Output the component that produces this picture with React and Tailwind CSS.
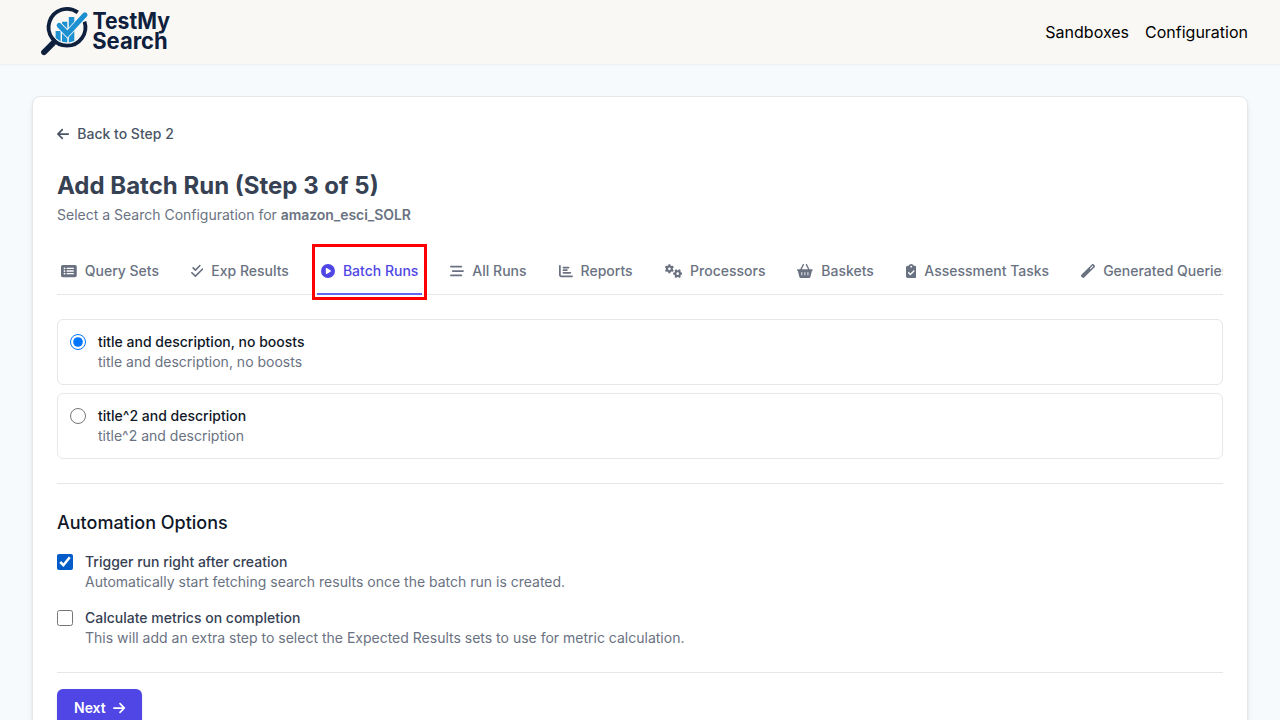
import React from "react";
import {
  FaArrowLeft,
  FaArrowRight,
  FaBarsStaggered,
  FaBasketShopping,
  FaChartBar,
  FaCheckDouble,
  FaCirclePlay,
  FaClipboardCheck,
  FaGears,
  FaRectangleList,
  FaWandMagic,
} from "react-icons/fa6";

const tabs = [
  { label: "Query Sets", Icon: FaRectangleList, size: "w-[15.75px]" },
  { label: "Exp Results", Icon: FaCheckDouble, size: "w-[12.25px]" },
  { label: "Batch Runs", Icon: FaCirclePlay, size: "w-[14px]", active: true },
  { label: "All Runs", Icon: FaBarsStaggered, size: "w-[14px]" },
  { label: "Reports", Icon: FaChartBar, size: "w-[14px]" },
  { label: "Processors", Icon: FaGears, size: "w-[17.5px]" },
  { label: "Baskets", Icon: FaBasketShopping, size: "w-[15.75px]" },
  { label: "Assessment Tasks", Icon: FaClipboardCheck, size: "w-[10.5px]" },
  { label: "Generated Queries", Icon: FaWandMagic, size: "w-[14px]" },
];

const configurations = [
  { title: "title and description, no boosts", text: "title and description, no boosts", checked: true },
  { title: "title^2 and description", text: "title^2 and description", checked: false },
];

const options = [
  {
    title: "Trigger run right after creation",
    text: "Automatically start fetching search results once the batch run is created.",
    checked: true,
  },
  {
    title: "Calculate metrics on completion",
    text: "This will add an extra step to select the Expected Results sets to use for metric calculation.",
    checked: false,
  },
];

function Logo() {
  return (
    <svg width="140" height="64" viewBox="0 0 140 64" role="img" aria-label="TestMy Search">
      <path d="M21 43.2 12 52.2" stroke="#0e203d" strokeWidth="5.8" strokeLinecap="round" fill="none" />
      <path d="M23.5 39.5 19 44" stroke="#0e203d" strokeWidth="3.4" fill="none" />
      <path d="M45.8 12.4A18.4 18.4 0 1 0 52.5 21.6" stroke="#0e203d" strokeWidth="3.8" fill="none" />
      <g fill="#1c90d0">
        <path d="M23.6 31h5v10.4L23.6 38z" />
        <path d="M30 21.8h5.3v20.8l-5.3-.8z" />
        <path d="M36.8 17h5.5v24l-5.5 1.6z" />
      </g>
      <path d="M27.2 25.4 35.4 33.9 53 14.8" stroke="#f9f8f4" strokeWidth="6.6" fill="none" />
      <path d="M27.2 25.4 35.4 33.9 53 14.8" stroke="#1c90d0" strokeWidth="5" strokeLinecap="round" fill="none" />
      <g fill="#0e203d" fontFamily="Inter, sans-serif" fontWeight="700" fontSize="22.5">
        <text x="60.5" y="29.3" textLength="77.5" lengthAdjust="spacingAndGlyphs">TestMy</text>
        <text x="60.2" y="49.4" textLength="75.5" lengthAdjust="spacingAndGlyphs">Search</text>
      </g>
    </svg>
  );
}

export default function App() {
  return (
    <div className="h-screen overflow-hidden bg-[#f6fafd] font-['Inter',sans-serif] text-gray-900">
      <header className="flex h-16 items-center justify-between bg-[#f9f8f4] px-8 shadow-[0_1px_2px_0_rgb(0_0_0/0.05)]">
        <Logo />
        <nav className="flex gap-4 text-base text-black">
          <a href="#sandboxes">Sandboxes</a>
          <a href="#configuration">Configuration</a>
        </nav>
      </header>

      <main className="p-8">
        <section className="rounded-lg border border-gray-200 bg-white p-6 shadow-md">
          <a href="#step-2" className="flex h-6 items-center gap-2 pt-0.5 text-sm font-medium text-gray-600">
            <FaArrowLeft className="h-3.5 w-[12.25px]" />
            Back to Step 2
          </a>
          <h1 className="mt-[25px] text-2xl font-bold text-gray-700">Add Batch Run (Step 3 of 5)</h1>
          <p className="mt-[3px] text-sm text-gray-500">
            Select a Search Configuration for <span className="font-semibold tracking-[-0.08px]">amazon_esci_SOLR</span>
          </p>

          <div className="relative mt-6">
            <div className="overflow-hidden">
              <nav className="flex gap-6 shadow-[inset_0_-1px_0_#e5e7eb]">
                {tabs.map(({ label, Icon, size, active }) => (
                  <a
                    key={label}
                    href="#tab"
                    className={
                      active
                        ? "flex shrink-0 items-center gap-2 border-b-2 border-[#6366f1] px-1 py-3 text-sm font-medium whitespace-nowrap text-[#4f46e5]"
                        : "flex shrink-0 items-center gap-2 border-b-2 border-transparent px-1 py-3 text-sm font-medium whitespace-nowrap text-gray-500"
                    }
                  >
                    <Icon className={`h-3.5 shrink-0 ${size}`} />
                    {label}
                  </a>
                ))}
              </nav>
            </div>
            <div className="pointer-events-none absolute -top-[5px] left-[255px] h-14 w-[115px] border-3 border-[#ff0000]" />
          </div>

          <div className="mt-6 flex flex-col gap-2">
            {configurations.map((item) => (
              <label key={item.title} className="flex items-start gap-3 rounded-md border border-gray-200 p-3 text-sm">
                <input type="radio" name="configuration" defaultChecked={item.checked} className="mt-0.5 size-4" />
                <span className="flex flex-col">
                  <span className="font-medium text-gray-900">{item.title}</span>
                  <span className="text-gray-500">{item.text}</span>
                </span>
              </label>
            ))}
          </div>

          <div className="mt-6 border-t border-gray-200 pt-[25px]">
            <h2 className="text-lg font-medium text-gray-900">Automation Options</h2>
            <div className="mt-[15px] flex flex-col gap-4">
              {options.map((item) => (
                <label key={item.title} className="flex items-start gap-3 text-sm">
                  <input type="checkbox" defaultChecked={item.checked} className="mt-0.5 size-4 accent-[#005cc8]" />
                  <span className="flex flex-col">
                    <span className="font-medium text-gray-700">{item.title}</span>
                    <span className="text-gray-500">{item.text}</span>
                  </span>
                </label>
              ))}
            </div>
          </div>

          <div className="mt-6 border-t border-gray-200 pt-4">
            <button className="flex w-[85px] items-center gap-[7.5px] rounded-md border border-transparent bg-[#4f46e5] px-4 py-2 text-sm font-semibold text-white shadow-sm">
              Next
              <FaArrowRight className="h-3.5 w-[12.25px] shrink-0" />
            </button>
          </div>
        </section>
      </main>
    </div>
  );
}
